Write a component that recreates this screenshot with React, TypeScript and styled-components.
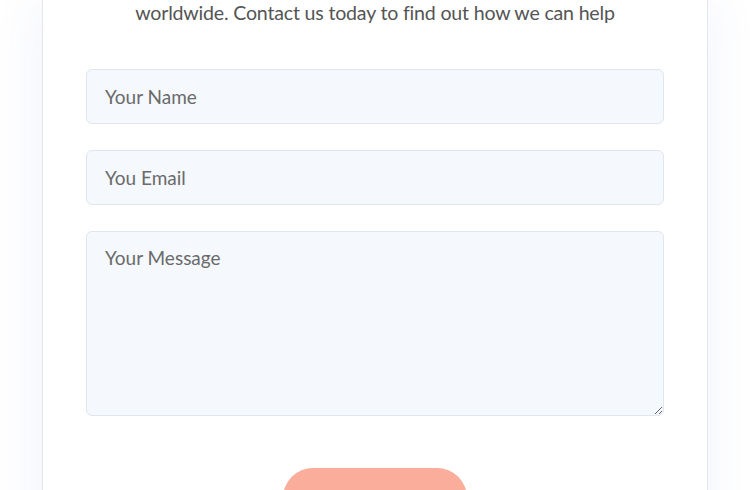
import React from "react";
import styled, { createGlobalStyle } from "styled-components";

const Global = createGlobalStyle`
  html, body { margin: 0; padding: 0; background: #ffffff; overflow: hidden; }
  body { font-family: "Lato", "Noto Sans", sans-serif; }
  * { box-sizing: border-box; }
`;

const Page = styled.div`
  width: 750px;
  height: 490px;
  overflow: hidden;
  display: flex;
  justify-content: center;
  align-items: flex-start;
  background: #ffffff;
`;

const Card = styled.section`
  width: 666px;
  min-height: 560px;
  background: #ffffff;
  border: 1px solid #e3e6f0;
  border-top: none;
  box-shadow: 0 0 50px rgba(70, 90, 200, 0.08);
  padding: 0 43px 40px;
  display: flex;
  flex-direction: column;
  align-items: center;
`;

const Lead = styled.p`
  margin: 0 0 43px;
  font-size: 19.6px;
  line-height: 26px;
  color: #555555;
  text-align: center;
  letter-spacing: -0.2px;
`;

const Form = styled.form`
  width: 100%;
  display: flex;
  flex-direction: column;
  gap: 26px;
`;

const fieldBase = `
  width: 100%;
  background: #f5f8fd;
  border: 1px solid #e0e6ee;
  border-radius: 6px;
  font-family: "Lato", "Noto Sans", sans-serif;
  font-size: 19px;
  color: #555;
  padding: 0 18px;
  outline: none;
  &::placeholder { color: #6a6a6a; opacity: 1; }
`;

const Input = styled.input`
  ${fieldBase}
  height: 55px;
`;

const TextArea = styled.textarea`
  ${fieldBase}
  height: 185px;
  padding-top: 14px;
  resize: vertical;
  display: block;
`;

const Submit = styled.button`
  margin-top: 26px;
  align-self: center;
  width: 184px;
  height: 60px;
  border: none;
  border-radius: 30px;
  background: #fbad9c;
  color: #ffffff;
  font-family: "Lato", "Noto Sans", sans-serif;
  font-size: 18px;
  padding-top: 12px;
`;

export default function App() {
  return (
    <>
      <Global />
      <Page>
        <Card>
          <Lead>worldwide. Contact us today to find out how we can help</Lead>
          <Form onSubmit={(e) => e.preventDefault()}>
            <Input placeholder="Your Name" />
            <Input placeholder="You Email" />
            <TextArea placeholder="Your Message" />
            <Submit type="submit">Send Message</Submit>
          </Form>
        </Card>
      </Page>
    </>
  );
}
